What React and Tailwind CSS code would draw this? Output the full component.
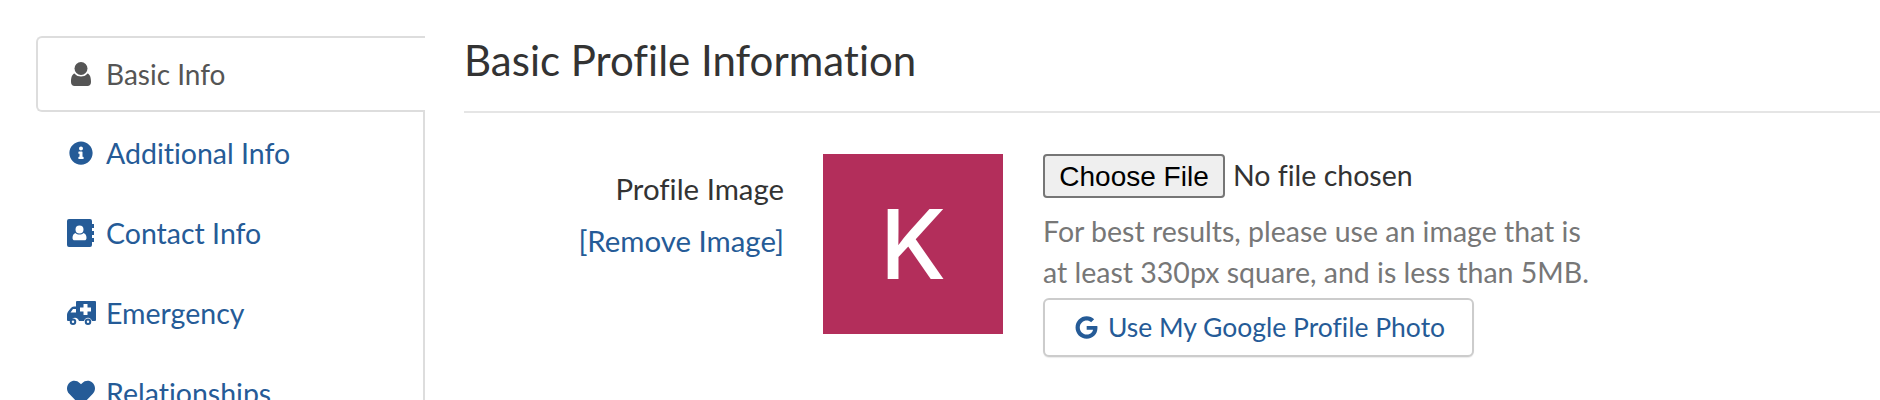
import React from 'react';
import { FaInfoCircle, FaHeart, FaGoogle } from 'react-icons/fa';

const UserIcon = () => (
  <svg viewBox="0 0 20 24" className="w-[20px] h-[24px]" fill="currentColor">
    <circle cx="10" cy="6.5" r="6.5" />
    <path d="M3.500 11.500c2 2.400 4.200 3 6.500 3s4.500-.6 6.500-3c2.200.6 3.500 3.500 3.500 8.500 0 2.800-1.500 4-3.500 4H3.500C1.500 24 0 22.800 0 20c0-5 1.300-7.900 3.500-8.500z" />
  </svg>
);

const ContactIcon = () => (
  <svg viewBox="0 0 27 28" className="w-[27px] h-[28px]" fill="currentColor">
    <path fillRule="evenodd" d="M2 0h21a2 2 0 0 1 2 2v24a2 2 0 0 1-2 2H2a2 2 0 0 1-2-2V2a2 2 0 0 1 2-2zM12.500 6.500a4 4 0 1 0 0 8 4 4 0 0 0 0-8zM8.500 14c-2 .6-3 2.500-3 5 0 1.500 1 2.300 2 2.300h10c1 0 2-.8 2-2.300 0-2.500-1-4.400-3-5-1 1-2.500 1.600-4 1.600S9.500 15 8.500 14z" />
    <rect x="25" y="5" width="2" height="4" />
    <rect x="25" y="12" width="2" height="4" />
    <rect x="25" y="19" width="2" height="4" />
  </svg>
);

const AmbulanceIcon = () => (
  <svg viewBox="0 0 29 24" className="w-[29px] h-[24px]" fill="currentColor">
    <path fillRule="evenodd" d="M10 0h18a1 1 0 0 1 1 1v18a1 1 0 0 1-1 1h-3c-.5-2-2-3.300-4-3.300s-3.500 1.300-4 3.300h-5c-.5-2-2-3.300-4-3.300s-3.500 1.300-4 3.300H1a1 1 0 0 1-1-1v-5c0-1.500.5-2.800 1.500-4l2-2.500C4.500 6.300 5.600 5.500 7 5.500h2V1a1 1 0 0 1 1-1zM6 8 3.500 11.500H9V8zM16.500 3v3.500H13v4h3.500V14h4v-3.500H24v-4h-3.500V3z" />
    <path fillRule="evenodd" d="M6 17.500a3.250 3.250 0 1 1 0 6.500 3.250 3.250 0 0 1 0-6.500zm0 2a1.250 1.250 0 1 0 0 2.500 1.250 1.250 0 0 0 0-2.500zM21 17.500a3.250 3.250 0 1 1 0 6.500 3.250 3.250 0 0 1 0-6.500zm0 2a1.250 1.250 0 1 0 0 2.500 1.250 1.250 0 0 0 0-2.500z" />
  </svg>
);

const NAV = [
  { label: 'Additional Info', icon: <FaInfoCircle className="w-[24px] h-[24px] mx-[2px]" /> },
  { label: 'Contact Info', icon: <ContactIcon /> },
  { label: 'Emergency', icon: <AmbulanceIcon /> },
  { label: 'Relationships', icon: <FaHeart className="w-[28px] h-[28px]" /> },
];

export default function App() {
  return (
    <div className="h-[400px] overflow-hidden bg-white flex font-['Lato',sans-serif] text-[#333] [font-variant-ligatures:none]">
      {/* Sidebar */}
      <div className="w-[425px] shrink-0 pl-[36px] pt-[36px]">
        <div className="h-[76px] flex items-center pl-[33px] pb-[1px] gap-[15px] bg-white border-2 border-r-0 border-[#ddd] rounded-l-[6px] text-[#555] text-[28px]">
          <UserIcon />
          <span>Basic Info</span>
        </div>
        <div className="border-r-2 border-[#ddd] h-[300px] pt-[1px]">
          {NAV.map(item => (
            <div key={item.label} className="h-[80px] flex items-center pl-[31px] text-[#255b97] text-[28.500px]">
              <span className="w-[39px] shrink-0 flex">{item.icon}</span>
              <span>{item.label}</span>
            </div>
          ))}
        </div>
      </div>

      {/* Main */}
      <div className="flex-1 pl-[39px] pt-[36px]">
        <h1 className="h-[77px] text-[42px] leading-[48px] border-b-2 border-[#e5e5e5]">Basic Profile Information</h1>
        <div className="flex pt-[41px]">
          <div className="w-[320px] shrink-0 text-right text-[29.400px] pt-[19px]">
            <div className="leading-[32px]">Profile Image</div>
            <div className="mt-[20px] leading-[32px] text-[#255b97]">[Remove Image]</div>
          </div>
          <div className="ml-[39px] w-[180px] h-[180px] shrink-0 bg-[#b32e5b] text-white text-[96px] font-['Inter',sans-serif] font-medium flex items-center justify-center">K</div>
          <div className="ml-[40px]">
            <div className="flex items-center h-[44px]">
              <button className="h-[44px] w-[182px] pb-[2px] bg-[#efefef] border-2 border-[#767676] rounded-[4px] text-black text-[28px] font-['Liberation_Sans',sans-serif]">Choose File</button>
              <span className="ml-[8px] mb-[3px] leading-[36px] text-[28.500px]">No file chosen</span>
            </div>
            <p className="mt-[13px] text-[28.500px] leading-[41px] text-[#777]">For best results, please use an image that is<br />at least 330px square, and is less than 5MB.</p>
            <button className="mt-[5px] h-[59px] w-[431px] flex items-center justify-center gap-[10px] pl-[3px] bg-white border-2 border-[#ccc] rounded-[6px] text-[#255b97] text-[26.500px] shadow-[0_1px_1px_rgba(0,0,0,0.08)]">
              <FaGoogle className="w-[23px] h-[23px]" />
              <span>Use My Google Profile Photo</span>
            </button>
          </div>
        </div>
      </div>
    </div>
  );
}
